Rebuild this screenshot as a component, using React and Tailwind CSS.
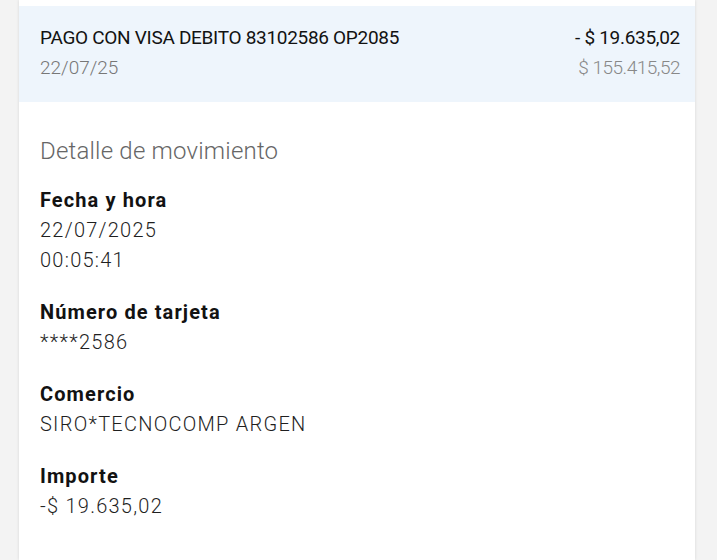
import React from "react";

const font = { fontFamily: "Roboto, 'Liberation Sans', sans-serif" };

function Field({ label, values }) {
  return (
    <div className="flex flex-col">
      <div className="text-[20px] leading-[30px] font-bold text-[#121212] tracking-[1.1px]">{label}</div>
      {values.map((v) => (
        <div key={v} className="text-[20px] leading-[30px] text-[#1f1f1f] font-light tracking-[1.25px]">{v}</div>
      ))}
    </div>
  );
}

export default function App() {
  return (
    <div className="w-[717px] h-[560px] bg-[#f3f3f3] overflow-hidden" style={font}>
      <div className="ml-[19px] w-[676px] h-full bg-white shadow-[0_0_3px_rgba(0,0,0,0.12)] flex flex-col">
        <div className="h-[6px] bg-white" />
        <div className="h-[96px] bg-[#eef5fc] pl-[21px] pr-[15px] pt-[17px] flex justify-between">
          <div className="flex flex-col">
            <div className="text-[19px] leading-[30px] text-[#121212] tracking-[-0.3px]">PAGO CON VISA DEBITO 83102586 OP2085</div>
            <div className="text-[19px] leading-[30px] text-[#777] font-light">22/07/25</div>
          </div>
          <div className="flex flex-col items-end">
            <div className="text-[19px] leading-[30px] text-[#121212] tracking-[-0.3px]">- $ 19.635,02</div>
            <div className="text-[19px] leading-[30px] text-[#888] font-light tracking-[-0.5px]">$ 155.415,52</div>
          </div>
        </div>
        <div className="pl-[21px] pt-[33px] flex flex-col">
          <div className="text-[24px] leading-[32px] text-[#666] font-light tracking-[0.2px]">Detalle de movimiento</div>
          <div className="mt-[18px] flex flex-col gap-[22px]">
            <Field label="Fecha y hora" values={["22/07/2025", "00:05:41"]} />
            <Field label="Número de tarjeta" values={["****2586"]} />
            <Field label="Comercio" values={["SIRO*TECNOCOMP ARGEN"]} />
            <Field label="Importe" values={["-$ 19.635,02"]} />
          </div>
        </div>
      </div>
    </div>
  );
}
